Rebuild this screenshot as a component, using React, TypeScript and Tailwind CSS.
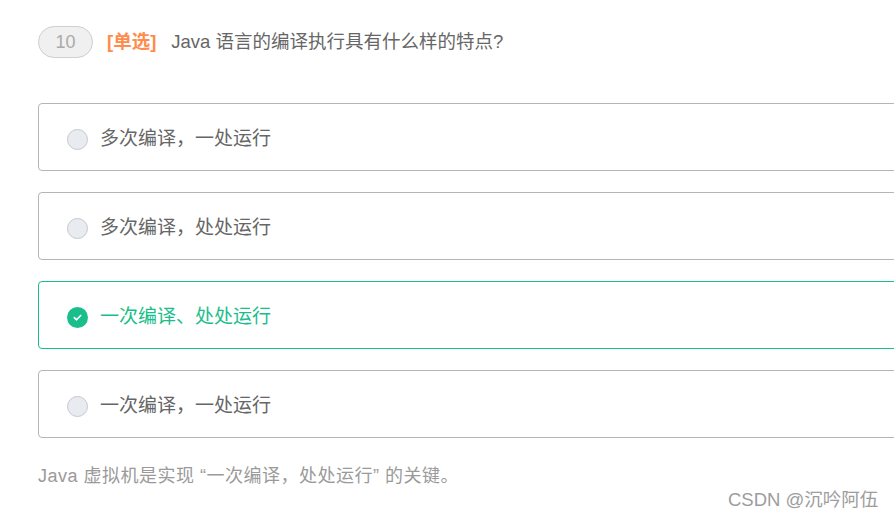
import React from 'react';

const options = [
    { text: '多次编译，一处运行', checked: false },
    { text: '多次编译，处处运行', checked: false },
    { text: '一次编译、处处运行', checked: true },
    { text: '一次编译，一处运行', checked: false },
];

function Radio({ checked }: { checked: boolean }) {
    if (checked) {
        return (
            <span className="w-[21px] h-[21px] rounded-full bg-[#19be8b] flex items-center justify-center shrink-0">
                <svg width="11" height="11" viewBox="0 0 12 12" fill="none">
                    <path d="M2.5 6.2 L5 8.5 L9.5 3.8" stroke="#fff" strokeWidth="1.8" strokeLinecap="round" strokeLinejoin="round" />
                </svg>
            </span>
        );
    }
    return <span className="w-[21px] h-[21px] rounded-full bg-[#e8ebef] border border-[#c4c8ce] shrink-0" />;
}

export default function App() {
    return (
        <div
            className="relative w-[894px] h-[520px] overflow-hidden bg-white pt-[26px] pl-[38px]"
            style={{ fontFamily: '"Liberation Sans", "Noto Sans CJK SC", sans-serif' }}
        >
            <div className="flex items-center h-[32px]">
                <span className="w-[55px] h-[32px] rounded-full bg-[#f0f0f0] border border-[#cfcfcf] text-[#aaa] text-[18px] flex items-center justify-center">
                    10
                </span>
                <span className="ml-[14px] text-[#ff8b4c] text-[18.5px] font-bold">[单选]</span>
                <span className="ml-[15px] text-[#666] text-[18.5px]">Java 语言的编译执行具有什么样的特点?</span>
            </div>

            <div className="mt-[45px] flex flex-col gap-[21px]">
                {options.map((o, i) => (
                    <div
                        key={i}
                        className={`w-[880px] h-[68px] rounded-[4px] border flex items-center pl-[28px] pt-[4px] gap-[12px] ${o.checked ? 'border-[#19be8b]' : 'border-[#b5b5b5]'}`}
                    >
                        <Radio checked={o.checked} />
                        <span className={`text-[19px] ${o.checked ? 'text-[#19be8b]' : 'text-[#666]'}`}>{o.text}</span>
                    </div>
                ))}
            </div>

            <div className="mt-[26px] text-[18px] leading-[24px] tracking-[0.5px] text-[#9a9a9a]">
                Java 虚拟机是实现 “一次编译，处处运行” 的关键。
            </div>

            <div className="absolute left-[728px] top-[488px] text-[18.5px] leading-[24px] text-[#9d9d9d]">
                CSDN @沉吟阿伍
            </div>
        </div>
    );
}
